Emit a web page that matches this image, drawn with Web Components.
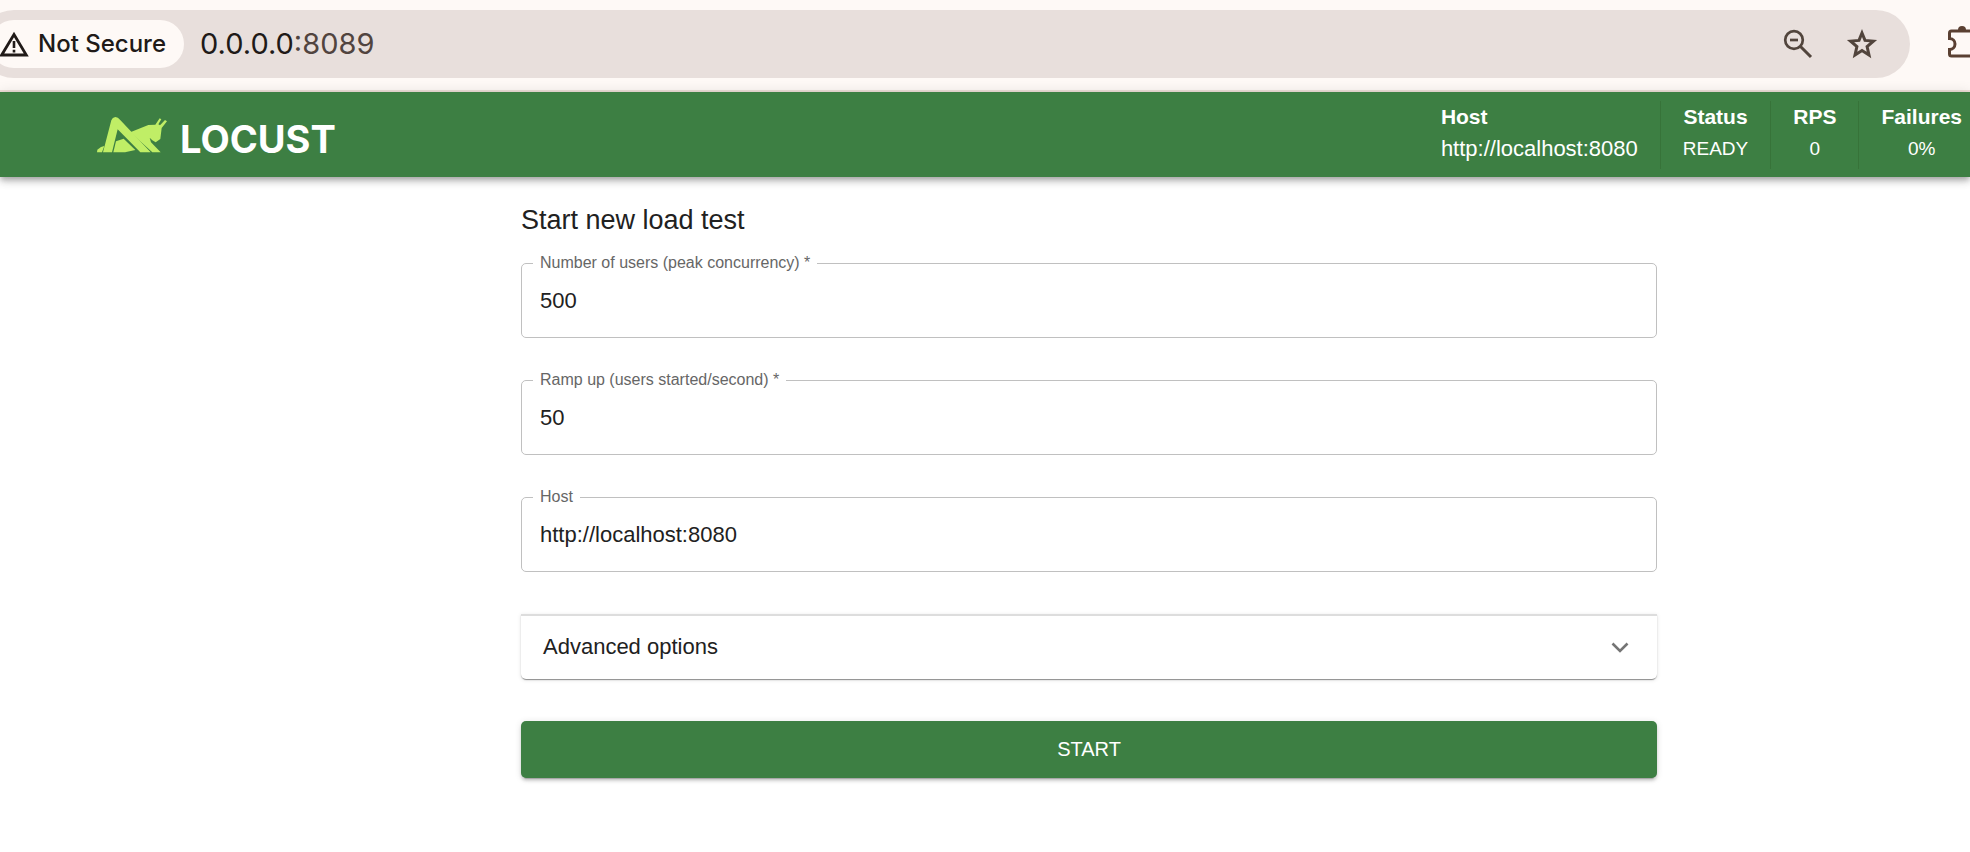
<!DOCTYPE html>
<html lang="en">
<head>
<meta charset="utf-8">
<title>Locust</title>
<style>
html, body { margin: 0; min-height: 100%; background: #fff; }
body { font-family: "Liberation Sans", Arial, sans-serif; font-size: 22px; line-height: 32px; color: #212121; overflow-x: hidden; }
</style>
</head>
<body>
<locust-app></locust-app>
<script>
function define(name, html, setup) {
  const template = document.createElement('template');
  template.innerHTML = html;
  customElements.define(name, class extends HTMLElement {
    constructor() {
      super();
      this.attachShadow({ mode: 'open' }).append(template.content.cloneNode(true));
    }
    connectedCallback() { if (setup) setup(this, this.shadowRoot); }
  });
}

define('browser-bar', `
<style>
:host { display: flex; align-items: center; height: 90px; background: #fef9f6; border-bottom: 2px solid #eedfd8; overflow: hidden; font-family: Inter, sans-serif; color: #201a18; }
.omnibox { flex: 1; min-width: 0; box-sizing: border-box; height: 68px; margin: -2px 38px 0 -20px; padding: 0 32px 0 10px; border-radius: 34px; background: #e8dfdc; display: flex; align-items: center; }
button { font: inherit; color: inherit; border: 0; padding: 0; background: none; display: flex; align-items: center; }
.chip { height: 48px; padding: 0 18px 0 8px; border-radius: 24px; background: #fef9f6; font-size: 24px; font-weight: 500; gap: 8px; white-space: nowrap; }
.url { flex: 1; margin-left: 16px; font-size: 29px; }
.port { color: #51443f; }
.actions { display: flex; gap: 32px; color: #51443c; }
.ext { color: #5a4032; flex: none; width: 22px; overflow: hidden; margin-top: -6px; }
svg { display: block; flex: none; }
</style>
<div class="omnibox">
  <button class="chip" type="button">
    <svg width="32" height="28" viewBox="0 0 32 28" fill="none" stroke="currentColor"><path d="M16 4.500 28.300 25H3.700Z" stroke-width="2.800"/><path d="M16 11v7M16 19.800v2.600" stroke-width="2.600"/></svg>
    <span>Not Secure</span>
  </button>
  <div class="url">0.0.0.0<span class="port">:8089</span></div>
  <div class="actions">
    <button type="button" aria-label="Zoom"><svg width="32" height="32" viewBox="0 0 32 32" fill="none" stroke="currentColor" stroke-width="2.700"><circle cx="12" cy="12" r="8.800"/><path d="M18.500 18.500 29 29" stroke-width="3"/><path d="M8 12h8"/></svg></button>
    <button type="button" aria-label="Bookmark"><svg width="32" height="32" viewBox="0 0 32 32" fill="none" stroke="currentColor" stroke-width="3"><path d="M16 5 19 12.400 27.400 13.100 21.100 18.500 23 27 16 22.500 9 27 10.900 18.500 4.600 13.100 13 12.400Z"/></svg></button>
  </div>
</div>
<button class="ext" type="button" aria-label="Extensions"><svg width="36" height="34" viewBox="0 0 36 34"><path d="M10 5a4 4 0 0 1 8 0Z" fill="currentColor"/><path d="M27 6H3.500Q1.500 6 1.500 8v5.500a5.500 5.500 0 0 1 0 11V29q0 2 2 2H27Z" fill="none" stroke="currentColor" stroke-width="3"/></svg></button>`);

define('locust-logo', `
<style>
:host { display: flex; align-items: center; }
a { display: flex; align-items: baseline; gap: 12px; color: #fff; text-decoration: none; font: 700 38px/26px Inter, sans-serif; }
svg { display: block; }
</style>
<a href="#" aria-label="Locust home">
<svg width="71" height="36" viewBox="0 0 213 108" fill="#c0ee66">
<path d="M0 106 1 98 12 90 22 87 15 106Z"/>
<path d="M18 106 43 10Q46 1 55 0 63 0 69 8L161 106H130L62 37 45 106Z"/>
<path d="M49 106 57 73 80 65 115 99 84 106Z"/>
<path d="M96 47 154 24 175 23 188 4 193 7 184 22 189 25 204 9 210 13 194 33 190 66 176 76 166 70 158 62 162 76 191 106H166L105 50Z"/>
</svg><span>LOCUST</span></a>`);

define('stat-item', `
<style>
:host { display: flex; flex-direction: column; align-items: center; box-sizing: border-box; height: 68px; padding: 0 22px; border-left: 1px solid #377339; white-space: nowrap; line-height: 32px; color: #fff; }
:host([lead]) { align-items: flex-start; border-left: 0; }
:host(:last-child) { padding-right: 0; }
b { font-size: 21px; }
span { font-size: 19px; }
:host([lead]) span { font-size: 22px; }
</style>
<b></b><span><slot></slot></span>`, (el, root) => { root.querySelector('b').textContent = el.getAttribute('label'); });

define('app-header', `
<style>
:host { position: relative; display: flex; justify-content: space-between; align-items: center; height: 85px; padding: 0 8px 0 97px; background: #3d7f43; box-shadow: 0 3px 5px -1px rgba(0,0,0,.2), 0 5px 7px rgba(0,0,0,.14), 0 1px 13px rgba(0,0,0,.12); }
.stats { display: flex; }
</style>
<locust-logo></locust-logo>
<div class="stats">
<stat-item lead label="Host">http://localhost:8080</stat-item>
<stat-item label="Status">READY</stat-item>
<stat-item label="RPS">0</stat-item>
<stat-item label="Failures">0%</stat-item>
</div>`);

define('outlined-field', `
<style>
:host { display: block; }
fieldset { box-sizing: border-box; height: 83px; margin: -8px 0 0; min-width: 0; padding: 0 18px; border: 1px solid #c0c0c0; border-radius: 5px; }
legend { margin-left: -7px; padding: 0 7px; font-size: 16px; line-height: 16px; color: #666; white-space: pre; }
input { display: block; box-sizing: border-box; width: 100%; height: 60px; padding: 0; border: 0; outline: 0; background: none; font: inherit; color: inherit; }
</style>
<fieldset><legend><label for="field"></label></legend><input id="field" type="text"></fieldset>`, (el, root) => {
  root.querySelector('label').textContent = el.getAttribute('label');
  root.querySelector('input').value = el.getAttribute('value');
});

define('options-panel', `
<style>
:host { display: block; }
button { display: flex; justify-content: space-between; align-items: center; box-sizing: border-box; width: 100%; height: 65px; padding: 0 22px 2px; border: 0; border-top: 2px solid #ddd; border-radius: 0 0 5px 5px; background: #fff; color: inherit; font: inherit; box-shadow: 0 3px 1px -2px rgba(0,0,0,.2), 0 1px 1px rgba(0,0,0,.25), 0 1px 4px rgba(0,0,0,.12); }
svg { display: block; }
</style>
<button type="button" aria-expanded="false"><slot></slot><svg width="30" height="30" viewBox="0 0 30 30" fill="none" stroke="#757575" stroke-width="2.600"><path d="M7.500 11.500 15 19l7.500-7.500"/></svg></button>`);

define('start-button', `
<style>
:host { display: block; }
button { display: block; width: 100%; height: 57px; padding: 0 0 2px; border: 0; border-radius: 5px; background: #3d7f43; color: #fff; font: inherit; font-size: 20px; box-shadow: 0 4px 1px -3px rgba(0,0,0,.2), 0 3px 3px rgba(0,0,0,.14), 0 1px 7px rgba(0,0,0,.12); }
</style>
<button type="submit"><slot></slot></button>`);

define('locust-app', `
<style>
:host { display: block; }
main { padding: 0 24px 74px 232px; }
form { max-width: 1136px; margin: 0 auto; display: flex; flex-direction: column; gap: 42px; }
section { display: flex; flex-direction: column; }
h1 { margin: 0; padding: 27px 0; font-size: 27px; line-height: 32px; font-weight: 400; }
</style>
<browser-bar></browser-bar>
<app-header></app-header>
<main><form>
<section><h1>Start new load test</h1>
<outlined-field label="Number of users (peak concurrency) *" value="500"></outlined-field></section>
<outlined-field label="Ramp up (users started/second) *" value="50"></outlined-field>
<outlined-field label="Host" value="http://localhost:8080"></outlined-field>
<options-panel>Advanced options</options-panel>
<start-button>START</start-button>
</form></main>`);
</script>
</body>
</html>
